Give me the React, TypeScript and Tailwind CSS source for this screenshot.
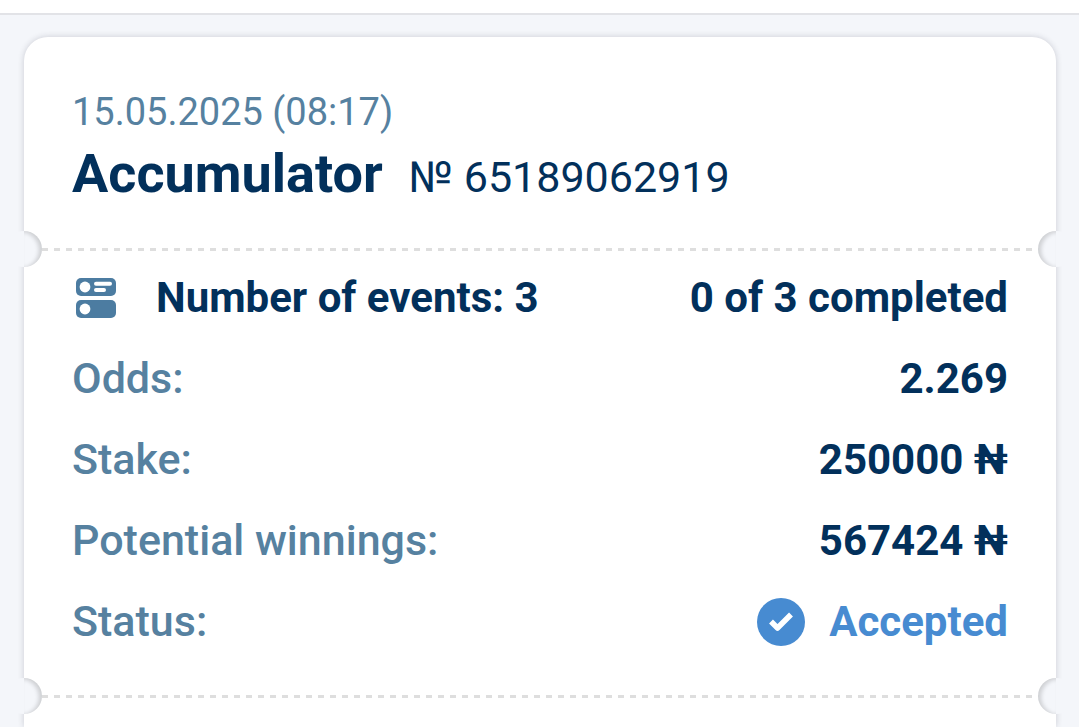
const details = [
  { label: 'Odds:', value: '2.269' },
  { label: 'Stake:', value: '250000 ₦' },
  { label: 'Potential winnings:', value: '567424 ₦' },
];

export default function App() {
  return (
    <div className="flex h-screen flex-col overflow-hidden bg-[#f4f6fa] font-['Roboto',sans-serif] text-[#02305b]">
      <header className="h-[15px] shrink-0 border-b-2 border-[#e2e3e7] bg-white" />
      <main className="flex grow flex-col pt-[22px] pr-[23px] pl-6">
        <article className="grow rounded-t-3xl bg-white shadow-[0_0_6px_rgba(40,40,60,0.2)]">
          <div className="px-12 pt-[51px] pb-10">
            <p className="text-[38px] leading-12 text-[#5681a0]">15.05.2025 (08:17)</p>
            <div className="flex items-baseline gap-[26px] pt-1.5">
              <h1 className="text-[54px] leading-16 font-bold">Accumulator</h1>
              <span className="text-[43px] leading-16">№ 65189062919</span>
            </div>
          </div>
          <Divider />
          <div className="px-12 pt-2 pb-[34px] text-[42px]">
            <div className="flex h-[81px] items-center justify-between font-bold">
              <h2 className="flex items-center gap-10">
                <EventsIcon />
                Number of events: 3
              </h2>
              <span>0 of 3 completed</span>
            </div>
            <dl>
              {details.map((item) => (
                <div key={item.label} className="flex h-[81px] items-center justify-between">
                  <dt className="text-[43px] font-medium text-[#5681a0]">{item.label}</dt>
                  <dd className="font-bold">{item.value}</dd>
                </div>
              ))}
              <div className="flex h-[81px] items-center justify-between">
                <dt className="text-[43px] font-medium text-[#5681a0]">Status:</dt>
                <dd className="flex items-center gap-6 font-bold text-[#478bd1]">
                  <AcceptedIcon />
                  Accepted
                </dd>
              </div>
            </dl>
          </div>
          <Divider />
        </article>
      </main>
    </div>
  );
}

// Perforated line with a round cut-out at each edge of the ticket
function Divider() {
  return (
    <div className="relative flex h-0 items-center px-[18px]">
      <div className="absolute -left-[18px] flex size-9 justify-end rounded-full bg-[#f4f6fa]">
        <div className="w-[18px] rounded-r-full shadow-[inset_-3px_1px_4px_rgba(0,0,0,0.16)]" />
      </div>
      <svg className="h-[3px] w-full" aria-hidden="true">
        <line x1="0" y1="1.5" x2="100%" y2="1.5" stroke="#dedede" strokeWidth="3" strokeDasharray="6 6" />
      </svg>
      <div className="absolute -right-[18px] flex size-9 rounded-full bg-[#f4f6fa]">
        <div className="w-[18px] rounded-l-full shadow-[inset_3px_1px_4px_rgba(0,0,0,0.16)]" />
      </div>
    </div>
  );
}

function EventsIcon() {
  return (
    <svg className="ml-1 h-10 w-10" viewBox="0 0 40 40" fill="none" aria-hidden="true">
      <rect width="40" height="18" rx="5" fill="#4c7ca1" />
      <rect y="22" width="40" height="18" rx="5" fill="#4c7ca1" />
      <circle cx="9" cy="9" r="5.4" fill="white" />
      <circle cx="9" cy="31" r="5.4" fill="white" />
      <path d="M20 5.7h14M20 11.9h8" stroke="white" strokeWidth="4" strokeLinecap="round" />
    </svg>
  );
}

function AcceptedIcon() {
  return (
    <svg className="h-12 w-12" viewBox="0 0 48 48" fill="none" aria-hidden="true">
      <circle cx="24" cy="24" r="24" fill="#478bd1" />
      <path d="M14 23.5 20.5 30 34 16.5" stroke="white" strokeWidth="5.5" strokeLinejoin="round" />
    </svg>
  );
}
